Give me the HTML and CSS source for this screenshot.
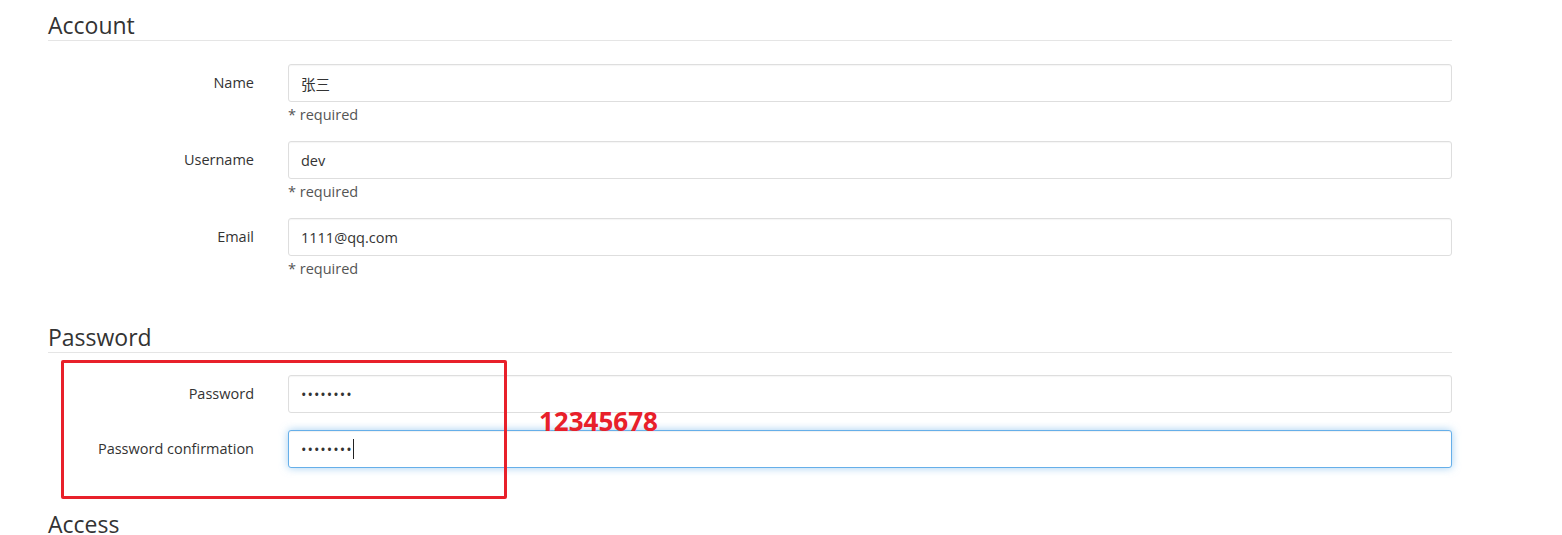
FILE: index.html
```html
<!DOCTYPE html>
<html lang="en">
<head>
  <meta charset="UTF-8" />
  <title>Edit user</title>
  <meta name="viewport" content="width=device-width, initial-scale=1.0"/>
  <link rel="stylesheet" href="styles.css">
</head>
<body>

<div class="page">

  <!-- Account -->
  <section class="form-section">
    <h2 class="section-title">Account</h2>

    <div class="form-row">
      <label class="form-label" for="name">Name</label>
      <div class="form-field">
        <input class="form-control" id="name" type="text" value="张三">
        <p class="help-text">* required</p>
      </div>
    </div>

    <div class="form-row">
      <label class="form-label" for="username">Username</label>
      <div class="form-field">
        <input class="form-control" id="username" type="text" value="dev">
        <p class="help-text">* required</p>
      </div>
    </div>

    <div class="form-row">
      <label class="form-label" for="email">Email</label>
      <div class="form-field">
        <input class="form-control" id="email" type="text" value="1111@qq.com">
        <p class="help-text">* required</p>
      </div>
    </div>
  </section>

  <!-- Password -->
  <section class="form-section password-section">
    <h2 class="section-title">Password</h2>

    <div class="form-row compact">
      <label class="form-label" for="password">Password</label>
      <div class="form-field">
        <input class="form-control secret" id="password" type="password" value="12345678">
      </div>
    </div>

    <div class="form-row compact">
      <label class="form-label" for="confirm">Password confirmation</label>
      <div class="form-field">
        <div class="form-control is-focused" id="confirm"><span class="dots">••••••••</span><span class="caret"></span></div>
      </div>
    </div>

    <div class="mark-box"></div>
    <div class="mark-note">12345678</div>
  </section>

  <!-- Access -->
  <section class="form-section access-section">
    <h2 class="section-title">Access</h2>
  </section>

</div>

</body>
</html>
```

FILE: styles.css
```css
* {
  margin: 0;
  padding: 0;
  box-sizing: border-box;
}

body {
  background: #fff;
  color: #333;
  font-family: 'Open Sans', 'Noto Sans', 'Noto Sans CJK SC', sans-serif;
  font-size: 14.5px;
}

.page {
  width: 1404px;
  margin-left: 48px;
  padding-top: 10px;
}

.form-section {
  position: relative;
}

.section-title {
  font-weight: normal;
  font-size: 23px;
  line-height: 30px;
  color: #333;
  border-bottom: 1px solid #e5e5e5;
  margin-bottom: 23px;
}

.password-section {
  margin-top: 43px;
}

.password-section .section-title {
  margin-bottom: 22px;
}

.access-section {
  margin-top: 41px;
}

.access-section .section-title {
  border-bottom: none;
}

.form-row {
  display: grid;
  grid-template-columns: 206px 1fr;
  column-gap: 34px;
  margin-bottom: 16px;
}

.form-row.compact {
  margin-bottom: 17px;
}

.form-label {
  text-align: right;
  line-height: 38px;
  color: #333;
}

.form-control {
  display: block;
  width: 100%;
  height: 38px;
  padding: 0 12px;
  font-family: inherit;
  font-size: 14.5px;
  color: #333;
  background: #fff;
  border: 1px solid #dedede;
  border-radius: 3px;
  box-shadow: inset 0 1px 1px rgba(0, 0, 0, 0.04);
  outline: none;
}

.form-control.secret {
  letter-spacing: 1px;
}

.form-control.is-focused {
  display: flex;
  align-items: center;
  border-color: #66afe9;
  box-shadow: inset 0 1px 1px rgba(0, 0, 0, 0.06), 0 0 8px rgba(102, 175, 233, 0.6);
}

.dots {
  letter-spacing: 1px;
}

.caret {
  display: inline-block;
  width: 1px;
  height: 20px;
  background: #222;
}

.help-text {
  margin-top: 2px;
  line-height: 21px;
  color: #555;
}

.mark-box {
  position: absolute;
  left: 13px;
  top: 38px;
  width: 446px;
  height: 139px;
  border: 3px solid #e8202a;
  border-radius: 2px;
}

.mark-note {
  position: absolute;
  left: 491px;
  top: 83px;
  font-family: 'Noto Sans', 'Open Sans', sans-serif;
  font-weight: bold;
  font-size: 26px;
  line-height: 32px;
  color: #e8202a;
}
```
